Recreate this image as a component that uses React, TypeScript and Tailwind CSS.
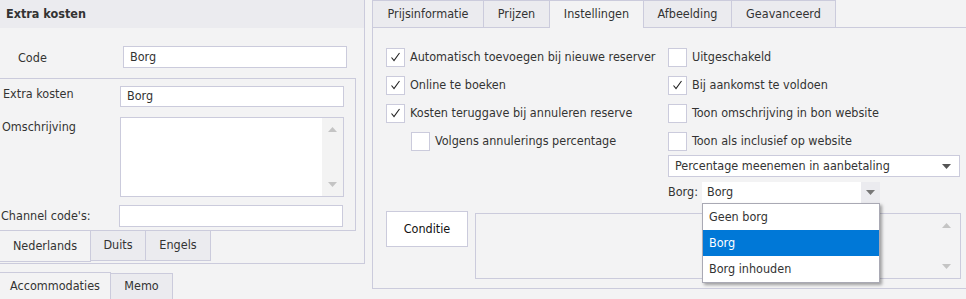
import React from "react";

const font = { fontFamily: '"DejaVu Sans Condensed", "DejaVu Sans", Tahoma, sans-serif' };

function Check({ checked }: { checked?: boolean }) {
  return (
    <div className="w-[19px] h-[19px] bg-white border border-[#cbcbdc] flex items-center justify-center shrink-0">
      {checked && (
        <svg width="11" height="10" viewBox="0 0 11 10" fill="none" stroke="#222" strokeWidth="1.1">
          <path d="M1.5 5.5 L4 8.5 L9.5 1" />
        </svg>
      )}
    </div>
  );
}

function CheckRow({ checked, label }: { checked?: boolean; label: string }) {
  return (
    <div className="h-[28px] flex items-center gap-[5px]">
      <Check checked={checked} />
      <span>{label}</span>
    </div>
  );
}

function Arrow({ up, color = "#c4c4c4" }: { up?: boolean; color?: string }) {
  return (
    <svg width="9" height="5" viewBox="0 0 9 5">
      <path d={up ? "M0 5 L4.5 0 L9 5 Z" : "M0 0 L9 0 L4.5 5 Z"} fill={color} />
    </svg>
  );
}

export default function App() {
  return (
    <div className="w-[966px] h-[299px] bg-[#f3f3f4] text-[12.5px] text-[#333] flex overflow-hidden" style={font}>
      {/* left side */}
      <div className="w-[372px] shrink-0 flex flex-col">
        <div className="w-[365px] h-[265px] border-r border-b border-[#cbcbdc] flex flex-col">
          <div className="h-[28px] bg-[#ebebef] flex items-center pl-[6px] font-bold">Extra kosten</div>
          <div className="mt-[18px] flex items-center h-[22px]">
            <span className="w-[123px] pl-[18px] pt-[2px]">Code</span>
            <div className="w-[224px] h-[22px] bg-white border border-[#cbcbdc] flex items-center pl-[6px]">Borg</div>
          </div>
          <div className="mt-[10px] w-[356px] border-t border-r border-b border-[#cbcbdc] pt-[7px] pb-[3px] flex flex-col">
            <div className="flex items-center h-[21px]">
              <span className="w-[120px] pl-[3px] self-start -mt-[1px]">Extra kosten</span>
              <div className="w-[224px] h-[21px] bg-white border border-[#cbcbdc] flex items-center pl-[6px]">Borg</div>
            </div>
            <div className="mt-[10px] flex items-start h-[80px]">
              <span className="w-[120px] pl-[2px] pt-[1px]">Omschrijving</span>
              <div className="w-[224px] h-[80px] bg-white border border-[#cbcbdc] flex justify-end">
                <div className="w-[21px] h-full bg-[#f3f3f3] flex flex-col items-center justify-between py-[9px]">
                  <Arrow up />
                  <Arrow />
                </div>
              </div>
            </div>
            <div className="mt-[8px] flex items-center h-[22px]">
              <span className="w-[119px] pl-[1px]">Channel code's:</span>
              <div className="w-[224px] h-[22px] bg-white border border-[#cbcbdc]" />
            </div>
          </div>
          <div className="flex h-[31px]">
            <div className="w-[91px] h-[31px] border-r border-b border-[#cbcbdc] flex items-center justify-center">Nederlands</div>
            <div className="w-[55px] h-[30px] bg-[#ebebef] border-r border-b border-[#cbcbdc] flex items-center justify-center">Duits</div>
            <div className="w-[65px] h-[30px] bg-[#ebebef] border-r border-b border-[#cbcbdc] flex items-center justify-center">Engels</div>
          </div>
        </div>
        <div className="mt-[8px] flex items-end">
          <div className="w-[111px] h-[27px] border-t border-r border-[#cbcbdc] flex items-center justify-center">Accommodaties</div>
          <div className="w-[62px] h-[26px] bg-[#ebebef] border-t border-r border-[#cbcbdc] flex items-center justify-center">Memo</div>
        </div>
      </div>

      {/* right side */}
      <div className="flex-1 flex flex-col">
        <div className="flex h-[28px]">
          <div className="w-[112px] h-[28px] bg-[#ebebef] border-l border-t border-r border-b border-[#cbcbdc] flex items-center justify-center">Prijsinformatie</div>
          <div className="w-[66px] h-[28px] bg-[#ebebef] border-t border-r border-b border-[#cbcbdc] flex items-center justify-center">Prijzen</div>
          <div className="w-[94px] h-[28px] border-t border-r border-[#cbcbdc] flex items-center justify-center">Instellingen</div>
          <div className="w-[88px] h-[28px] bg-[#ebebef] border-t border-r border-b border-[#cbcbdc] flex items-center justify-center">Afbeelding</div>
          <div className="w-[104px] h-[28px] bg-[#ebebef] border-t border-r border-b border-[#cbcbdc] flex items-center justify-center">Geavanceerd</div>
          <div className="flex-1 border-b border-[#cbcbdc]" />
        </div>
        <div className="h-[261px] border-l border-b border-[#cbcbdc] pt-[15px] pl-[13px] flex flex-col">
          <div className="flex">
            <div className="w-[282px]">
              <CheckRow checked label="Automatisch toevoegen bij nieuwe reserver" />
              <CheckRow checked label="Online te boeken" />
              <CheckRow checked label="Kosten teruggave bij annuleren reserve" />
              <div className="pl-[25px]">
                <CheckRow label="Volgens annulerings percentage" />
              </div>
            </div>
            <div className="w-[292px] flex flex-col">
              <CheckRow label="Uitgeschakeld" />
              <CheckRow checked label="Bij aankomst te voldoen" />
              <CheckRow label="Toon omschrijving in bon website" />
              <CheckRow label="Toon als inclusief op website" />
              <div className="mt-[0px] h-[22px] bg-white border border-[#cbcbdc] flex items-center justify-between pl-[6px] pr-[8px]">
                <span>Percentage meenemen in aanbetaling</span>
                <Arrow color="#555" />
              </div>
              <div className="mt-[5px] h-[21px] flex items-center">
                <span className="w-[34px]">Borg:</span>
                <div className="relative w-[178px] h-[21px] bg-white flex items-center">
                  <span className="pl-[5px] flex-1">Borg</span>
                  <div className="w-[19px] h-full bg-[#ebebef] flex items-center justify-center">
                    <Arrow color="#777" />
                  </div>
                  <div className="absolute left-0 top-[21px] w-[178px] bg-white border border-[#a9a9b4] shadow-[2px_2px_3px_rgba(0,0,0,0.35)] z-10">
                    <div className="h-[26px] flex items-center pl-[6px]">Geen borg</div>
                    <div className="h-[26px] flex items-center pl-[6px] bg-[#0078d7] text-white">Borg</div>
                    <div className="h-[26px] flex items-center pl-[6px]">Borg inhouden</div>
                  </div>
                </div>
              </div>
            </div>
          </div>
          <div className="mt-[8px] flex items-start gap-[7px]">
            <div className="w-[82px] h-[36px] bg-white border border-[#cbcbdc] flex items-center justify-center text-[#111]">Conditie</div>
            <div className="mt-[2px] w-[486px] h-[66px] border border-[#cbcbdc] flex flex-col items-end justify-between py-[9px] pr-[9px]">
              <Arrow up />
              <Arrow />
            </div>
          </div>
        </div>
      </div>
    </div>
  );
}
